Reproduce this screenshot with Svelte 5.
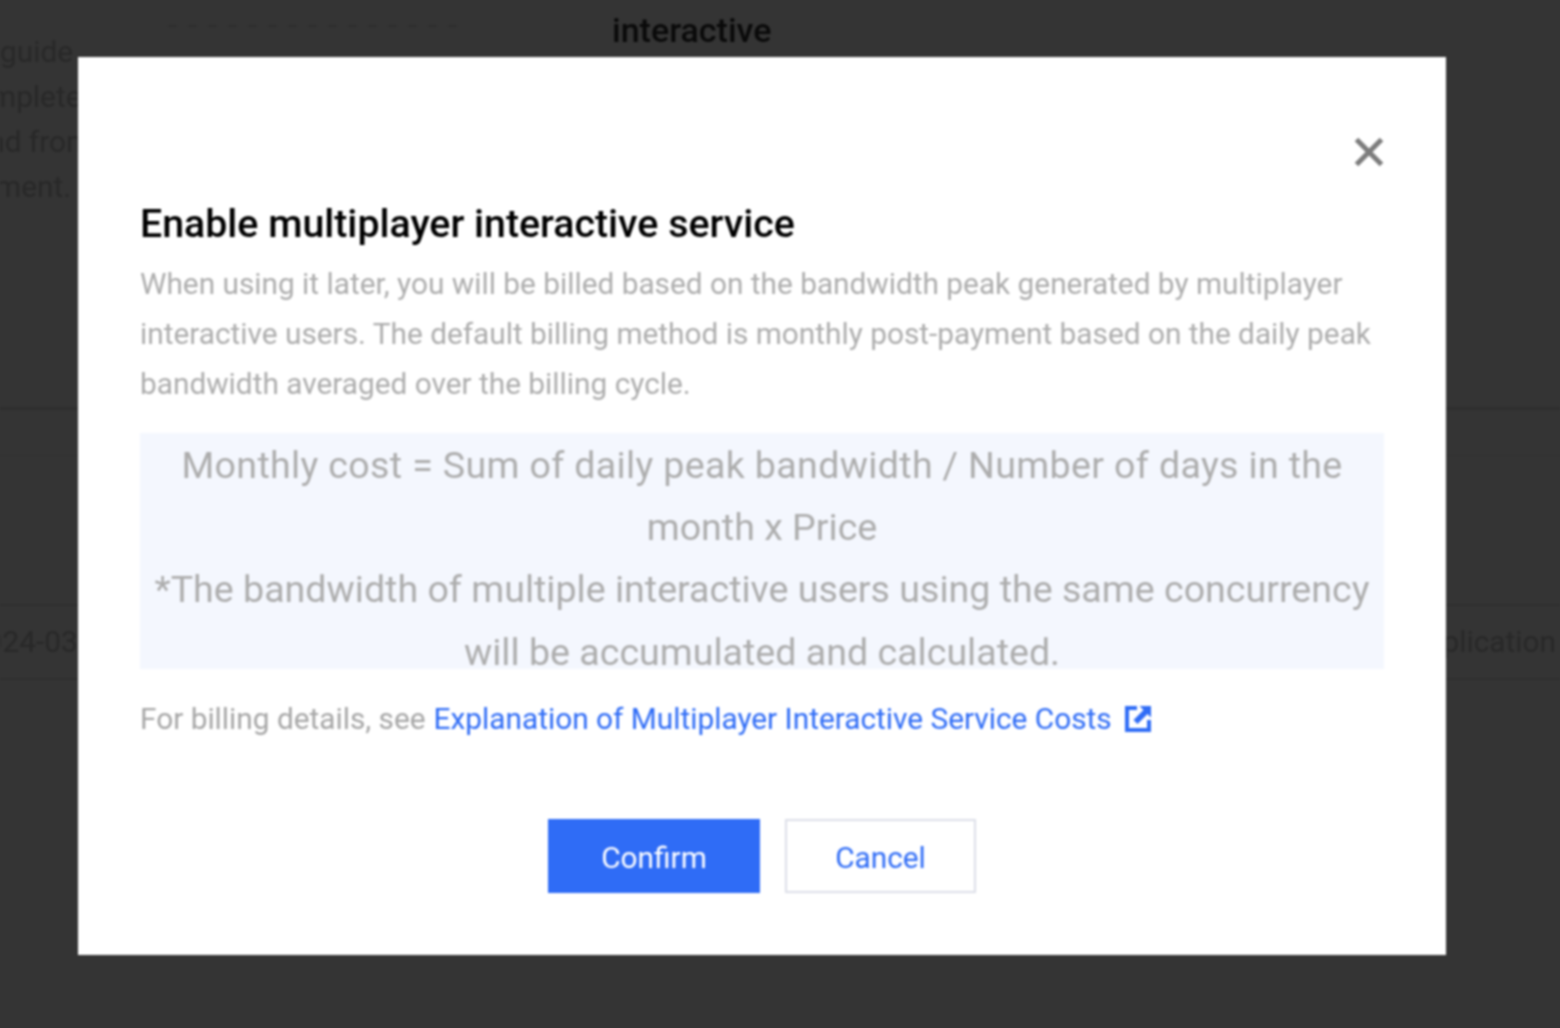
<script>
  const sideLines = [
    { text: 'guide', cls: '' },
    { text: 'mplete', cls: 'shift-a' },
    { text: 'and from', cls: 'shift-b' },
    { text: 'ment.', cls: 'shift-c' }
  ];
</script>

<div class="page">
  <section class="intro">
    <div class="dash"></div>
    <div class="word">interactive</div>
    <div class="side">
      {#each sideLines as line}
        <div class={line.cls}>{line.text}</div>
      {/each}
    </div>
  </section>
  <section class="table">
    <div class="head-rule"></div>
    <div class="row">
      <span class="date">2024-03</span>
      <span class="app">plication</span>
    </div>
  </section>

  <div class="overlay">
    <div class="modal" role="dialog">
      <button class="close" aria-label="Close">
        <svg width="32" height="32" viewBox="0 0 32 32"><path d="M3.500 3.500 28.500 28.500M28.500 3.500 3.500 28.500" stroke="#7c7c7c" stroke-width="5" fill="none" /></svg>
      </button>
      <h2>Enable multiplayer interactive service</h2>
      <p class="desc">When using it later, you will be billed based on the bandwidth peak generated by multiplayer interactive users. The default billing method is monthly post-payment based on the daily peak bandwidth averaged over the billing cycle.</p>
      <div class="formula">
        <span class="wide">Monthly cost = Sum of daily peak bandwidth / Number of days in the</span> month x Price<br />
        *The bandwidth of multiple interactive users using the same concurrency will be accumulated and calculated.
      </div>
      <p class="details">
        <span>For billing details, see</span>
        <a href="#costs">Explanation of Multiplayer Interactive Service Costs</a>
        <svg class="ext" width="26" height="26" viewBox="0 0 26 26"><path d="M12 0H0v26h26V14h-4v8H4V4h8Z" fill="#2f6cf6" /><path d="M14.500 0H26v11.500L22.500 8 12.500 18 8.500 14 18.500 4Z" fill="#2f6cf6" /></svg>
      </p>
      <div class="actions">
        <button class="btn primary">Confirm</button>
        <button class="btn">Cancel</button>
      </div>
    </div>
  </div>
</div>

<style>
  :global(body) {
    margin: 0;
    background: #343434;
  }
  .page {
    position: relative;
    width: 1560px;
    height: 1028px;
    overflow: hidden;
    background: #343434;
    font-family: Roboto, "Liberation Sans", sans-serif;
    filter: blur(0.8px);
  }
  .intro {
    position: relative;
    height: 410px;
    box-sizing: border-box;
    border-bottom: 3px solid #2e2e2e;
  }
  .dash {
    position: absolute;
    left: 168px;
    top: 25px;
    width: 300px;
    height: 2px;
    background: repeating-linear-gradient(90deg, #2e2e2e 0 9px, transparent 9px 20px);
  }
  .word {
    position: absolute;
    left: 612px;
    top: 10px;
    font-size: 34px;
    line-height: 40px;
    font-weight: 500;
    color: #0a0a0a;
  }
  .side {
    position: absolute;
    left: 0;
    top: 29px;
    width: 78px;
    overflow: hidden;
    color: #282828;
    font-size: 29.800px;
    line-height: 45px;
    white-space: nowrap;
  }
  .shift-a {
    margin-left: -10px;
  }
  .shift-b {
    margin-left: -28px;
  }
  .shift-c {
    margin-left: -5px;
  }
  .table {
    padding-top: 45px;
  }
  .head-rule {
    border-top: 1px solid #303030;
    margin-bottom: 148px;
  }
  .row {
    display: flex;
    justify-content: space-between;
    height: 72px;
    border-top: 2px solid #2f2f2f;
    border-bottom: 2px solid #2f2f2f;
    color: #282828;
    font-size: 29.800px;
    line-height: 72px;
    white-space: nowrap;
  }
  .date {
    margin-left: -31px;
  }
  .app {
    margin-right: 4px;
  }
  .overlay {
    position: absolute;
    inset: 0;
  }
  .modal {
    position: absolute;
    left: 78px;
    top: 57px;
    width: 1368px;
    height: 898px;
    box-sizing: border-box;
    padding: 145px 62px 0;
    background: #fff;
  }
  .close {
    position: absolute;
    top: 79px;
    right: 61px;
    width: 32px;
    height: 32px;
    padding: 0;
    border: 0;
    background: none;
  }
  h2 {
    margin: 0;
    font-size: 39.300px;
    line-height: 44px;
    font-weight: 500;
    color: #000;
  }
  .desc {
    margin: 13px 0 0;
    font-size: 29.800px;
    line-height: 50px;
    color: #adadad;
  }
  .formula {
    margin-top: 24px;
    height: 235px;
    padding-top: 1px;
    overflow: hidden;
    background: #f4f7fe;
    text-align: center;
    font-size: 37.600px;
    line-height: 62.200px;
    color: #adadad;
  }
  .wide {
    letter-spacing: 0.34px;
  }
  .details {
    margin: 25px 0 0;
    font-size: 29.800px;
    line-height: 50px;
    color: #a6a6a6;
    display: flex;
    align-items: center;
    gap: 8px;
  }
  .details a {
    color: #2f6cf6;
    text-decoration: none;
  }
  .ext {
    margin-left: 5px;
    flex: none;
  }
  .actions {
    display: flex;
    justify-content: center;
    gap: 25px;
    margin-top: 75px;
  }
  .btn {
    width: 191px;
    height: 74px;
    padding: 4px 0 0;
    border: 2px solid #dcdfe8;
    background: #fff;
    color: #2f6cf6;
    font: 400 29.800px/1 Roboto, "Liberation Sans", sans-serif;
  }
  .primary {
    width: 212px;
    border-color: #2f6cf6;
    background: #2f6cf6;
    color: #fff;
  }
</style>
